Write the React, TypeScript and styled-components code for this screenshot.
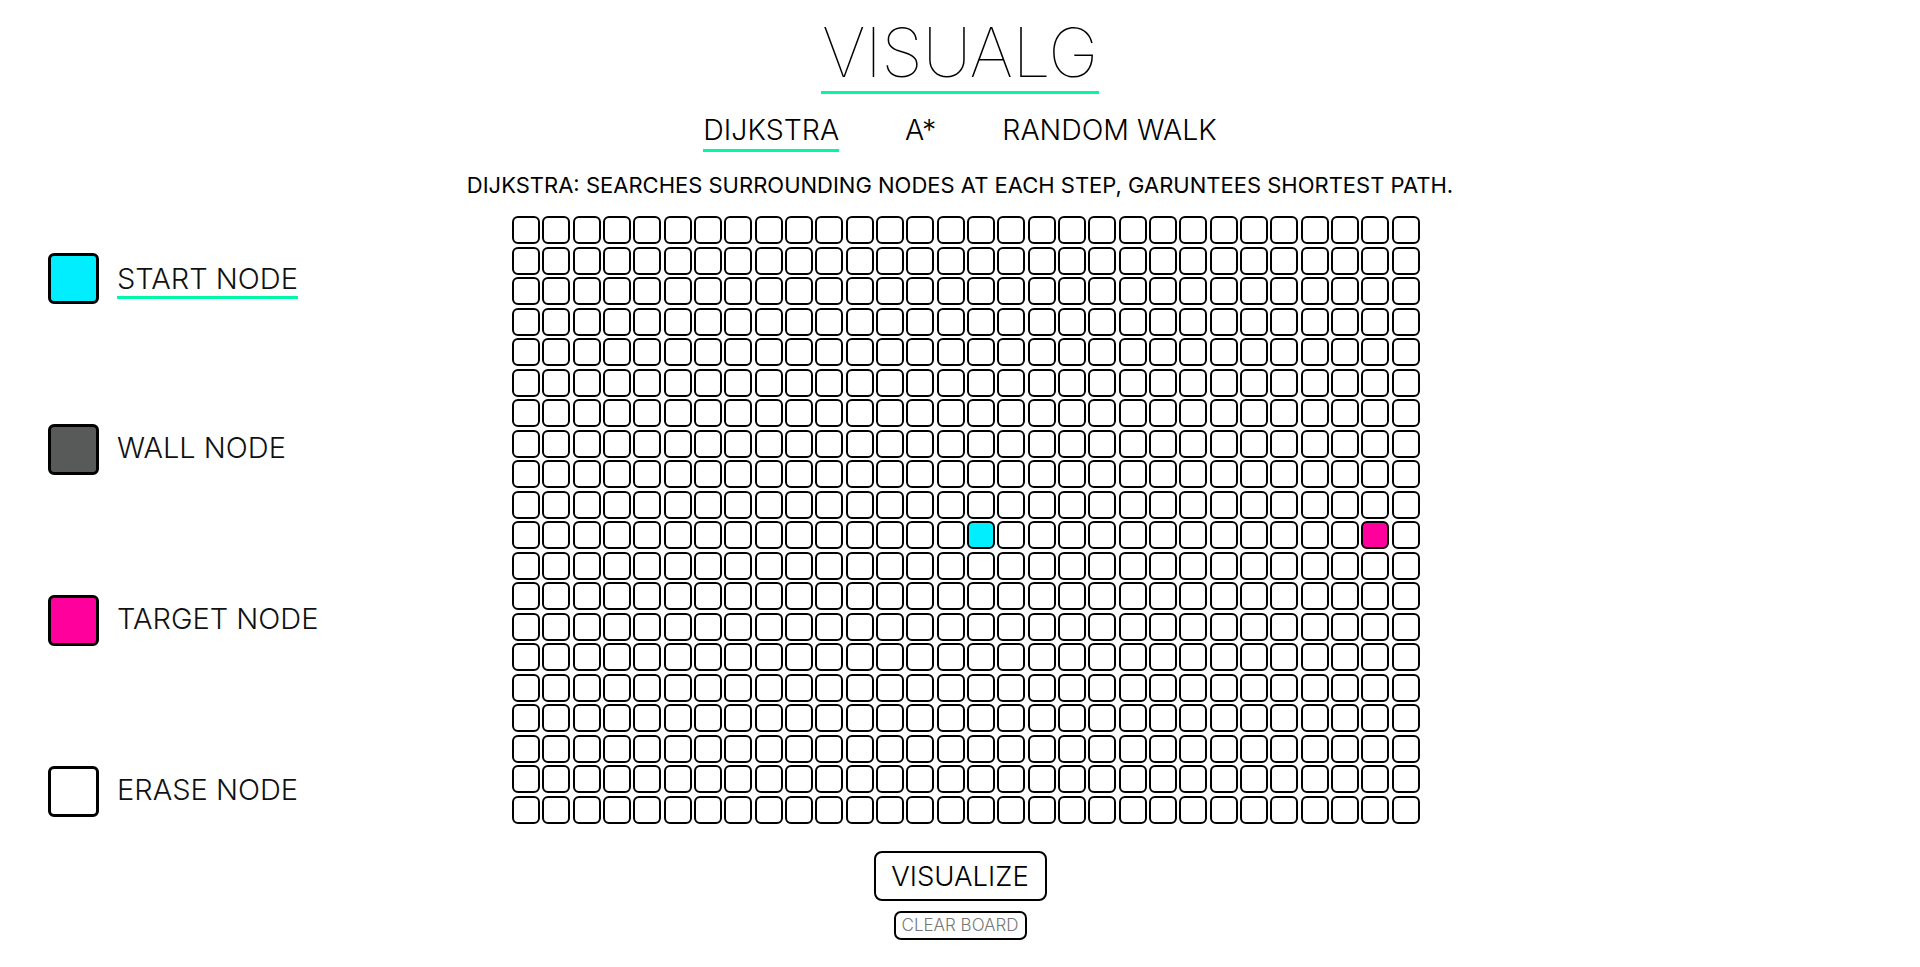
import React from "react";
import styled, { createGlobalStyle } from "styled-components";

const Global = createGlobalStyle`
  html, body { margin: 0; padding: 0; background: #fff; }
  body { font-family: Inter, "Noto Sans", sans-serif; color: #000; }
`;

const ACCENT = "#00f7a5";
const COLS = 30;
const ROWS = 20;
const START = { r: 10, c: 15 };
const TARGET = { r: 10, c: 28 };

const Page = styled.div`
  display: flex;
  flex-direction: column;
  align-items: center;
  width: 1920px;
  height: 967px;
  overflow: hidden;
`;

const Title = styled.h1`
  margin: 13px 0 0;
  font-weight: 100;
  font-size: 68px;
  line-height: 78px;
  letter-spacing: -0.5px;
  border-bottom: 3px solid ${ACCENT};
  padding: 0 1px;
`;

const Nav = styled.nav`
  display: flex;
  gap: 66px;
  margin-top: 19px;
`;

const NavItem = styled.span<{ $active?: boolean }>`
  font-size: 28.5px;
  font-weight: 300;
  line-height: 34px;
  padding-bottom: 2px;
  border-bottom: 3px solid ${(p) => (p.$active ? ACCENT : "transparent")};
`;

const Description = styled.p`
  margin: 19px 0 0;
  font-size: 22px;
  font-weight: 400;
  line-height: 28px;
`;

const Main = styled.div`
  align-self: stretch;
  display: flex;
  margin-top: 17px;
`;

const Legend = styled.div`
  width: 464px;
  padding: 37px 0 0 48px;
  display: flex;
  flex-direction: column;
  gap: 120px;
`;

const LegendItem = styled.div`
  display: flex;
  align-items: center;
  gap: 18px;
  height: 51px;
`;

const Swatch = styled.div<{ $color: string }>`
  width: 51px;
  height: 51px;
  box-sizing: border-box;
  border: 3px solid #000;
  border-radius: 6px;
  background: ${(p) => p.$color};
`;

const LegendLabel = styled.span<{ $active?: boolean }>`
  font-size: 29px;
  font-weight: 300;
  line-height: 34px;
  color: #111;
  border-bottom: 3px solid ${(p) => (p.$active ? ACCENT : "transparent")};
  margin-top: ${(p) => (p.$active ? "3px" : "0")};
`;

const Board = styled.div`
  display: grid;
  grid-template-columns: repeat(${COLS}, 28px);
  grid-auto-rows: 28px;
  column-gap: 2.33px;
  row-gap: 2.5px;
`;

const Cell = styled.div<{ $color: string }>`
  box-sizing: border-box;
  border: 2px solid #000;
  border-radius: 6px;
  background: ${(p) => p.$color};
`;

const Buttons = styled.div`
  display: flex;
  flex-direction: column;
  align-items: center;
  gap: 10px;
  margin-top: 27px;
`;

const VisualizeButton = styled.button`
  width: 173px;
  height: 50px;
  box-sizing: border-box;
  border: 2px solid #000;
  border-radius: 8px;
  background: #fff;
  font-family: inherit;
  font-size: 27.5px;
  font-weight: 300;
  color: #000;
  padding: 0;
`;

const ClearButton = styled.button`
  width: 133px;
  height: 29px;
  box-sizing: border-box;
  border: 2px solid #000;
  border-radius: 7px;
  background: #fff;
  font-family: inherit;
  font-size: 17px;
  font-weight: 300;
  color: #777;
  padding: 0;
`;

const legend = [
  { label: "START NODE", color: "#00eeff", active: true },
  { label: "WALL NODE", color: "#575a59" },
  { label: "TARGET NODE", color: "#ff009d" },
  { label: "ERASE NODE", color: "#ffffff" },
];

export default function App() {
  const cells = [];
  for (let r = 0; r < ROWS; r++) {
    for (let c = 0; c < COLS; c++) {
      let color = "#fff";
      if (r === START.r && c === START.c) color = "#00eeff";
      if (r === TARGET.r && c === TARGET.c) color = "#ff009d";
      cells.push(<Cell key={`${r}-${c}`} $color={color} />);
    }
  }
  return (
    <Page>
      <Global />
      <Title>VISUALG</Title>
      <Nav>
        <NavItem $active>DIJKSTRA</NavItem>
        <NavItem>A*</NavItem>
        <NavItem>RANDOM WALK</NavItem>
      </Nav>
      <Description>
        DIJKSTRA: SEARCHES SURROUNDING NODES AT EACH STEP, GARUNTEES SHORTEST PATH.
      </Description>
      <Main>
        <Legend>
          {legend.map((l) => (
            <LegendItem key={l.label}>
              <Swatch $color={l.color} />
              <LegendLabel $active={l.active}>{l.label}</LegendLabel>
            </LegendItem>
          ))}
        </Legend>
        <Board>{cells}</Board>
      </Main>
      <Buttons>
        <VisualizeButton>VISUALIZE</VisualizeButton>
        <ClearButton>CLEAR BOARD</ClearButton>
      </Buttons>
    </Page>
  );
}
